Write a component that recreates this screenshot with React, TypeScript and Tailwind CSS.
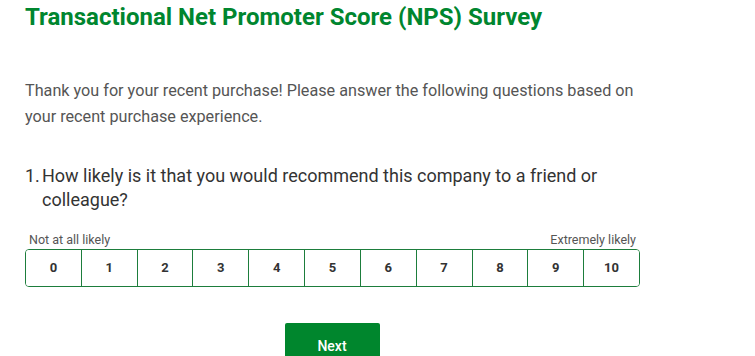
export default function App() {
  const scores = Array.from({ length: 11 }, (_, i) => i);

  return (
    <div className="w-[755px] h-[356px] overflow-hidden bg-white font-['Roboto',sans-serif]">
      <div className="pl-[25px] w-[640px]">
        <h1 className="pt-[3px] text-[24px] leading-[28px] font-bold text-[#00862f]">
          Transactional Net Promoter Score (NPS) Survey
        </h1>

        <p className="mt-[47px] text-[16.2px] leading-[26px] text-[#555555]">
          Thank you for your recent purchase! Please answer the following questions based on
          your recent purchase experience.
        </p>

        <div className="mt-[34px] flex text-[18px] leading-[24px] text-[#333333] pr-[20px]">
          <span className="shrink-0 w-[17px]">1.</span>
          <span>How likely is it that you would recommend this company to a friend or colleague?</span>
        </div>

        <div className="mt-[21px] flex justify-between px-[4px] text-[12.5px] leading-[14px] text-[#555555]">
          <span>Not at all likely</span>
          <span>Extremely likely</span>
        </div>

        <div className="mt-[2px] w-[615px] h-[38px] flex border border-[#1d7d3c] rounded-[4px] overflow-hidden">
          {scores.map((n) => (
            <button
              key={n}
              className="flex-1 flex items-center justify-center border-l border-[#1d7d3c] first:border-l-0 text-[13px] font-bold text-[#333333] bg-white"
            >
              {n}
            </button>
          ))}
        </div>

        <div className="mt-[36px] flex justify-center">
          <button className="ml-[-1px] w-[95px] h-[40px] bg-[#00862d] text-white text-[14px] font-medium rounded-t-[2px] pt-[6px]">
            Next
          </button>
        </div>
      </div>
    </div>
  );
}
